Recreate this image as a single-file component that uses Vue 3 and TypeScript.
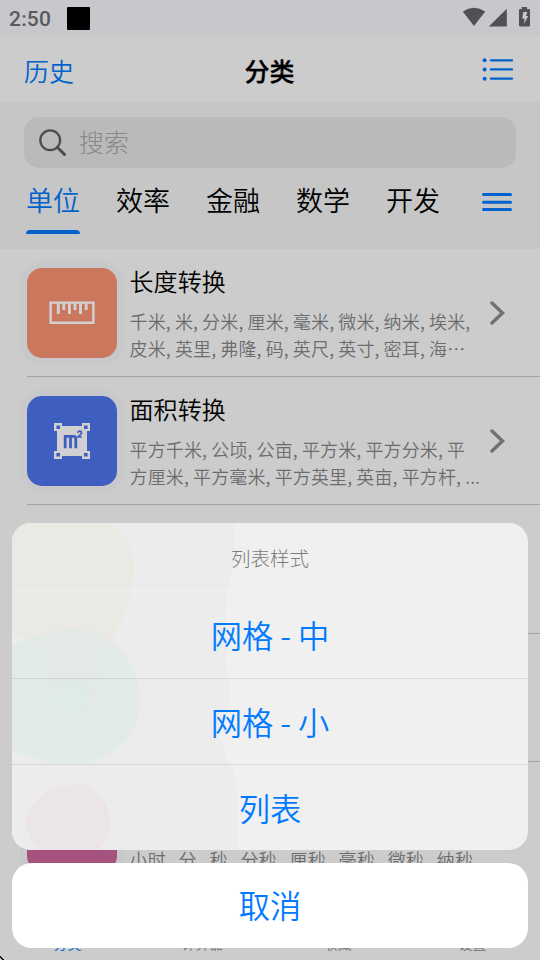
<script setup lang="ts">
interface Category {
  id: string
  title: string
  lines: string[]
}

const tabs: string[] = ['单位', '效率', '金融', '数学', '开发']
const categories: Category[] = [
  { id: 'length', title: '长度转换', lines: ['千米, 米, 分米, 厘米, 毫米, 微米, 纳米, 埃米,', '皮米, 英里, 弗隆, 码, 英尺, 英寸, 密耳, 海⋯'] },
  { id: 'area', title: '面积转换', lines: ['平方千米, 公顷, 公亩, 平方米, 平方分米, 平', '方厘米, 平方毫米, 平方英里, 英亩, 平方杆, ...'] },
]
const options: string[] = ['网格 - 中', '网格 - 小', '列表']
const navItems: string[] = ['分类', '计算器', '收藏', '设置']
</script>

<template>
  <div class="screen">
    <div class="status">
      <span class="clock">2:50</span>
      <span class="notice"></span>
      <svg class="status-icons" width="72" height="24" viewBox="0 0 72 24">
        <path d="M.8 5.4Q12 -1.8 23.2 5.4L12 20Z" />
        <path d="M44.8 2.8V20.5H26.8Z" />
        <path d="M59.7 1H65v1.9h2q1 0 1 1V19.2q0 1.3-1.3 1.3h-8.4q-1.3 0-1.3-1.3V3.9q0-1 1-1h1.7Z" />
        <path class="bolt" d="M61.3 6h4l-1.3 4h2.2l-4.3 8 .7-5.4h-2.3Z" />
      </svg>
    </div>

    <header class="navbar">
      <span class="history">历史</span>
      <h1>分类</h1>
      <svg class="list-icon" width="32" height="24" viewBox="0 0 32 24">
        <path d="M9 3.3h21M9 12.4h21M9 21.7h21" />
        <circle cx="2.6" cy="3.3" r="2" /><circle cx="2.6" cy="12.4" r="2" /><circle cx="2.6" cy="21.7" r="2" />
      </svg>
    </header>

    <section class="filters">
      <div class="search">
        <svg width="28" height="28" viewBox="0 0 28 28">
          <circle cx="11.2" cy="11.2" r="9.9" /><path d="m18.3 18.3 7.2 7.2" />
        </svg>
        <span>搜索</span>
      </div>
      <nav class="tabs">
        <span v-for="(tab, i) in tabs" :key="tab" :class="['tab', { active: i === 0 }]">{{ tab }}</span>
        <svg class="menu" width="30" height="20" viewBox="0 0 30 20"><path d="M1.5 2.4h27M1.5 10.3h27M1.5 17.4h27" /></svg>
      </nav>
    </section>

    <main class="list">
      <article v-for="item in categories" :key="item.id" class="row">
        <div :class="['tile', item.id]">
          <svg v-if="item.id === 'length'" width="46" height="24" viewBox="0 0 46 24">
            <path class="ruler" d="M1.6 1.6h42.8v20.2H1.6Z" />
            <path class="ticks" d="M9.3 2v11M14.8 2v7M20.4 2v11M26 2v7M31.5 2v11M37.2 2v7" />
          </svg>
          <svg v-else width="38" height="38" viewBox="0 0 38 38">
            <path class="plate" d="M4 4h30v30H4Z" />
            <path class="plate" d="M1 1h8v8H1ZM29 1h8v8h-8ZM1 29h8v8H1ZM29 29h8v8h-8Z" />
            <path class="hole" d="M3.4 3.4H7V7H3.4ZM31 3.4h3.6V7H31ZM3.4 31H7v3.6H3.4ZM31 31h3.6v3.6H31Z" />
            <path class="symbol" d="M12.2 26.3V14.3h8.6q2 0 2 2v10M17.5 15v11.3" />
            <path class="power" d="M24.8 10.8q.2-1.7 1.9-1.7 1.8 0 1.8 1.6 0 .8-1.1 1.9l-2.3 2.4h3.8" />
          </svg>
        </div>
        <div class="copy">
          <h2>{{ item.title }}</h2>
          <p v-for="line in item.lines" :key="line">{{ line }}</p>
        </div>
        <svg class="chevron" width="16" height="24" viewBox="0 0 16 24"><path d="m2 2 10.5 10L2 22" /></svg>
      </article>
      <article class="row bare"></article>
      <article class="row bare"></article>
      <article class="row last">
        <div class="tile time"></div>
        <div class="copy"><p class="units">小时, 分, 秒, 分秒, 厘秒, 毫秒, 微秒, 纳秒,</p></div>
      </article>
    </main>

    <footer class="bottom-nav">
      <span v-for="(item, i) in navItems" :key="item" :class="{ active: i === 0 }">{{ item }}</span>
    </footer>
    <i class="corner"></i>

    <div class="sheet-layer">
      <div class="sheet">
        <svg class="tint" width="516" height="327" viewBox="0 0 516 327">
          <path fill="#ececec" d="M0 0H223V42Q214 63 214 85V145Q220 165 216 189Q205 201 207 213Q214 225 214 235Q225 249 225 272V327H0Z" />
          <path fill="#eae9e4" d="M0 0H99Q122 17 122 45Q122 75 106 105Q92 132 88 165Q80 190 60 196Q42 188 36 160Q24 122 0 109Z" />
          <path fill="#e2ebe7" d="M0 122Q28 108 60 106Q89 106 109 128Q128 148 128 177Q128 203 110 222Q85 243 58 242Q30 240 0 227Z" />
          <path fill="#e3e9e4" d="M15 117Q38 106 62 106Q86 106 100 119Q89 143 88 165Q80 190 60 196Q42 188 36 160Q31 136 15 117Z" />
          <path fill="#deebe6" d="M40 177Q41 159 58 158Q76 159 77 176Q77 191 58 191Q41 191 40 177Z" />
          <path fill="#ebe5e9" d="M28 327Q14 314 14 298Q16 282 36 268Q53 260 72 261Q98 276 98 297Q98 315 87 327Z" />
        </svg>
        <div class="sheet-title">列表样式</div>
        <div v-for="option in options" :key="option" class="option">{{ option }}</div>
      </div>
      <div class="cancel">取消</div>
    </div>
  </div>
</template>

<style>
body { margin: 0; }
</style>

<style scoped>
* { box-sizing: border-box; }
.screen { position: relative; width: 540px; height: 960px; overflow: hidden; display: flex; flex-direction: column; background: #ccc; color: #000; font-family: "Noto Sans CJK SC", sans-serif; font-weight: 350; white-space: nowrap; }
svg { display: block; flex-shrink: 0; fill: none; }
h1, h2, p { margin: 0; font-weight: 350; }
.status { height: 36px; flex-shrink: 0; background: #c8c7cc; display: flex; align-items: center; padding: 0 6px 0 9px; }
.clock { font: 500 21px/36px Roboto, sans-serif; color: #5a5a5c; width: 58px; padding-top: 2px; letter-spacing: .2px; }
.notice { width: 23px; height: 23px; background: #000; border-radius: 1px; margin-top: 1px; }
.status-icons { margin-left: auto; fill: #515153; }
.bolt { fill: #c8c7cc; }
.navbar { height: 66px; flex-shrink: 0; display: grid; grid-template-columns: 1fr auto 1fr; align-items: center; padding: 0 26px 0 24px; }
.history { font-size: 25px; line-height: 36px; color: #0062cc; padding-top: 1px; }
.navbar h1 { font-size: 25px; line-height: 36px; font-weight: 500; padding: 1px 0 0 1px; -webkit-text-stroke: .35px #000; }
.list-icon { justify-self: end; fill: #0062cc; }
.list-icon path { stroke: #0062cc; stroke-width: 2.3; stroke-linecap: round; }
.filters { height: 147px; flex-shrink: 0; background: #c6c6c6; padding-top: 15px; }
.search { height: 51px; margin: 0 24px; border-radius: 15px; background: #bababa; display: flex; align-items: center; gap: 12px; padding-left: 15px; color: #888; font-size: 25px; font-weight: 300; line-height: 36px; }
.search span { padding-bottom: 3px; }
.search svg { stroke: #4c4c4c; stroke-width: 2.3; stroke-linecap: round; }
.search path { stroke-width: 3; }
.tabs { display: flex; gap: 36px; padding: 11px 28px 0 26px; height: 80px; }
.tab { width: 54px; font-size: 27px; line-height: 42px; }
.tab.active { color: #0062cc; }
.tab.active::after { content: ""; display: block; height: 4.5px; margin-top: 8.5px; border-radius: 4px 4px 0 0; background: #0062cc; }
.menu { margin: 13px 0 0 auto; stroke: #0062cc; stroke-width: 3; stroke-linecap: round; }
.list { flex: 1; min-height: 0; display: flex; flex-direction: column; }
.row { height: 128.2px; flex-shrink: 0; margin-left: 27px; border-bottom: 1px solid #a3a3a4; display: flex; align-items: center; }
.tile { width: 90px; height: 90px; flex-shrink: 0; border-radius: 15px; box-shadow: 0 0 0 7px #c8c8ca; display: flex; align-items: center; justify-content: center; }
.length { background: #ca775e; }
.area { background: #3e5fbf; }
.time { background: #a5527c; }
.ruler { stroke: #d2d2d2; stroke-width: 2.4; }
.ticks { stroke: #d2d2d2; stroke-width: 2.9; }
.plate { fill: #d0d0d2; }
.hole { fill: #3e5fbf; }
.symbol { stroke: #3e5fbf; stroke-width: 2.8; }
.power { stroke: #3e5fbf; stroke-width: 1.7; }
.copy { width: 350px; margin-left: 12.5px; height: 120px; }
.copy h2 { font-size: 24px; line-height: 36px; margin: 10px 0 9px; letter-spacing: .1px; }
.copy p { font-size: 18px; line-height: 27px; letter-spacing: .13px; color: #6c6c6e; }
.chevron { margin-left: 10px; stroke: #727274; stroke-width: 3.5; stroke-linecap: round; stroke-linejoin: miter; }
.last { border: 0; }
.copy .units { margin-top: 80px; word-spacing: 3.7px; }
.bottom-nav { height: 75px; flex-shrink: 0; display: grid; grid-template-columns: repeat(4, 1fr); align-items: end; text-align: center; padding-bottom: 7px; font-size: 14px; line-height: 20px; color: #747476; background: #ccc; }
.bottom-nav .active { color: #0062cc; }
.corner { position: absolute; left: 0; bottom: 0; width: 4px; height: 4px; background: linear-gradient(45deg, transparent 30%, #111 31% 50%, transparent 51%); }
.sheet-layer { position: absolute; inset: 523px 12px 12px; display: flex; flex-direction: column; gap: 13px; text-align: center; color: #007aff; font-size: 31.3px; }
.sheet { position: relative; height: 327px; background: #f0f0f0; border-radius: 19px; overflow: hidden; }
.tint { position: absolute; inset: 0; }
.sheet-title { position: relative; height: 68px; font-size: 19.5px; line-height: 70px; color: #7b7b7b; font-weight: 300; }
.option { position: relative; height: 86.5px; line-height: 86px; border-top: 1px solid rgba(60, 70, 70, .12); }
.sheet-title + .option { border-color: rgba(255, 255, 255, .25); }
.cancel { height: 85px; line-height: 84px; background: #fff; border-radius: 20px; }
</style>
